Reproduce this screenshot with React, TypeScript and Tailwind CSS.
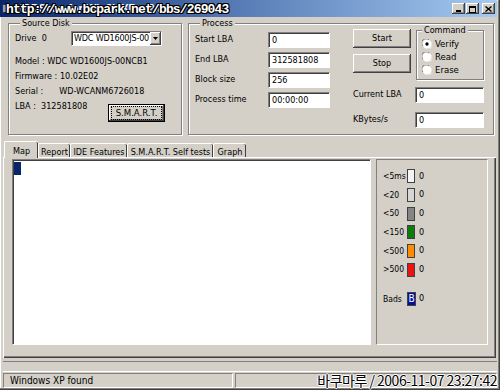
import React from "react";

const ui = "font-['DejaVu_Sans_Condensed','Liberation_Sans',sans-serif]";

const raised =
  "bg-[#d4d0c8] shadow-[inset_-1px_-1px_0_#404040,inset_1px_1px_0_#fff,inset_-2px_-2px_0_#808080]";
const sunken = "border border-[#808080] border-b-white border-r-white shadow-[inset_1px_1px_0_#404040]";

function Edit({ value, className = "" }: { value: string; className?: string }) {
  return (
    <div className={`flex h-[16px] items-center bg-white pl-[3px] ${sunken} ${className}`}>
      <span className="whitespace-nowrap text-[9px] leading-none">{value}</span>
    </div>
  );
}

function Group({ title, className = "", children }: { title: string; className?: string; children: React.ReactNode }) {
  return (
    <fieldset
      className={`border border-[#808080] shadow-[1px_1px_0_#fff,inset_1px_1px_0_#fff] ${className}`}
    >
      <legend className="ml-[5px] bg-[#d4d0c8] px-[2px] text-[9px] leading-[10px]">{title}</legend>
      {children}
    </fieldset>
  );
}

function Radio({ label, checked }: { label: string; checked?: boolean }) {
  return (
    <div className="flex h-[13px] items-center gap-[3px] pl-[5px]">
      <svg width="10" height="10" viewBox="0 0 12 12">
        <circle cx="6" cy="6" r="5.5" fill="#fff" />
        <path d="M1.2 8.5 A5 5 0 0 1 8.5 1.2" stroke="#808080" strokeWidth="1.2" fill="none" />
        <path d="M10.8 3.5 A5 5 0 0 1 3.5 10.8" stroke="#e8e8e8" strokeWidth="1.2" fill="none" />
        {checked && <circle cx="6" cy="6" r="2" fill="#000" />}
      </svg>
      <span className="text-[9.5px] leading-none">{label}</span>
    </div>
  );
}

function Button({ label, className = "" }: { label: string; className?: string }) {
  return (
    <div className={`flex items-center justify-center text-[9px] ${raised} ${className}`}>{label}</div>
  );
}

const legend = [
  { label: "<5ms", color: "bg-[#f4f4f4]" },
  { label: "<20", color: "bg-[#d6d6d6]" },
  { label: "<50", color: "bg-[#858585]" },
  { label: "<150", color: "bg-[#0a7d0a]" },
  { label: "<500", color: "bg-[#ff8c00]" },
  { label: ">500", color: "bg-[#ee1111]" },
];

const tabs = [
  { label: "Map", w: "w-[34px]" },
  { label: "Report", w: "w-[32px]" },
  { label: "IDE Features", w: "w-[57px]" },
  { label: "S.M.A.R.T. Self tests", w: "w-[86px]" },
  { label: "Graph", w: "w-[33px]" },
];

export default function App() {
  return (
    <div
      className={`relative h-[390px] w-[500px] overflow-hidden bg-[#d4d0c8] text-black ${ui} shadow-[inset_-1px_-1px_0_#404040,inset_-2px_-2px_0_#808080,inset_1px_1px_0_#fff]`}
    >
      {/* title bar */}
      <div className="flex h-[17px] w-[497px] items-center bg-gradient-to-r from-[#0a246a] via-[#5a7fb8] to-[#a6caf0] pl-[2px]">
        <div className="h-[9px] w-[9px] border border-[#203060] bg-[#8aa0c8]" />
        <span className="ml-[4px] font-['Liberation_Sans',sans-serif] text-[11px] font-bold leading-none text-white">
          HDDScan for Win2k/XP&nbsp;&nbsp;v2.8
        </span>
        <div className="ml-auto flex items-center gap-[1px] pr-[2px]">
          {["min", "max"].map((k) => (
            <div key={k} className={`flex h-[11px] w-[13px] items-end justify-center pb-[2px] ${raised}`}>
              {k === "min" ? (
                <div className="h-[2px] w-[5px] bg-black" />
              ) : (
                <div className="mb-[-1px] h-[7px] w-[7px] border border-black border-t-2" />
              )}
            </div>
          ))}
          <div className={`ml-[2px] flex h-[11px] w-[13px] items-center justify-center ${raised}`}>
            <svg width="7" height="6" viewBox="0 0 7 6">
              <path d="M0.5 0.5 L6.5 5.5 M6.5 0.5 L0.5 5.5" stroke="#000" strokeWidth="1.4" />
            </svg>
          </div>
        </div>
      </div>

      {/* top section */}
      <div className="flex h-[120px] gap-[6px] pl-[8px] pt-[1px]">
        <Group title="Source Disk" className="h-[117px] w-[174px] px-[6px]">
          <div className="mt-[3px] flex h-[15px] items-center">
            <span className="w-[56px] text-[9px]">Drive&nbsp;&nbsp;0</span>
            <div className={`flex h-[15px] w-[91px] items-center overflow-hidden bg-white pl-[2px] ${sunken}`}>
              <span className="whitespace-nowrap text-[9px] leading-none tracking-[-0.2px]">WDC WD1600JS-00</span>
              <div className={`ml-auto flex h-full w-[11px] shrink-0 items-center justify-center ${raised}`}>
                <svg width="5" height="3" viewBox="0 0 5 3">
                  <path d="M0 0 H5 L2.5 3 Z" fill="#000" />
                </svg>
              </div>
            </div>
          </div>
          <div className="mt-[10px] flex flex-col gap-[5px] text-[9px] leading-[10px]">
            <span>Model : WDC WD1600JS-00NCB1</span>
            <span>Firmware : 10.02E02</span>
            <span>
              Serial :<span className="ml-[16px]">WD-WCANM6726018</span>
            </span>
            <div className="flex items-start">
              <span>LBA :&nbsp;&nbsp;312581808</span>
              <div className="ml-auto mr-[10px] mt-[3px] border border-black">
                <div className={`flex h-[16px] w-[55px] items-center justify-center ${raised}`}>
                  <span className="border border-dotted border-black px-[4px] py-[1px] text-[9.5px] leading-none">
                    S.M.A.R.T.
                  </span>
                </div>
              </div>
            </div>
          </div>
        </Group>

        <Group title="Process" className="flex h-[117px] w-[306px] pl-[6px]">
          <div className="flex">
            <div className="mt-[4px] flex flex-col gap-[4px]">
              {[
                ["Start LBA", "0"],
                ["End LBA", "312581808"],
                ["Block size", "256"],
                ["Process time", "00:00:00"],
              ].map(([l, v]) => (
                <div key={l} className="flex items-center">
                  <span className="w-[73px] text-[9px]">{l}</span>
                  <Edit value={v} className="w-[62px]" />
                </div>
              ))}
            </div>
            <div className="ml-[23px] flex flex-col">
              <div className="flex">
                <div className="mt-[1px] flex flex-col gap-[6px]">
                  <Button label="Start" className="h-[19px] w-[58px]" />
                  <Button label="Stop" className="h-[19px] w-[58px]" />
                </div>
                <Group title="Command" className="ml-[5px] mt-[-3px] h-[55px] w-[68px] pt-[2px]">
                  <Radio label="Verify" checked />
                  <Radio label="Read" />
                  <Radio label="Erase" />
                </Group>
              </div>
              <div className="mt-[7px] flex items-center">
                <span className="w-[62px] text-[9px]">Current LBA</span>
                <Edit value="0" className="w-[69px]" />
              </div>
              <div className="mt-[9px] flex items-center">
                <span className="w-[62px] text-[9px]">KBytes/s</span>
                <Edit value="0" className="w-[69px]" />
              </div>
            </div>
          </div>
        </Group>
      </div>

      {/* tabs */}
      <div className="mt-[4px] flex h-[16px] items-end pl-[4px]">
        {tabs.map((t, i) => (
          <div
            key={t.label}
            className={`flex items-start justify-center whitespace-nowrap rounded-t-[2px] border-l border-t border-white shadow-[inset_-1px_0_0_#404040] text-[9px] ${t.w} ${
              i === 0 ? "relative z-10 -mb-[1px] h-[17px] bg-[#d4d0c8] pt-[3px]" : "h-[14px] pt-[2px]"
            }`}
          >
            {t.label}
          </div>
        ))}
      </div>
      <div className="mx-[3px] flex h-[201px] w-[493px] gap-[5px] border-l border-t border-white pl-[8px] pt-[1px] shadow-[inset_-1px_-1px_0_#404040,inset_-2px_-2px_0_#808080]">
        <div className="h-[186px] w-[359px] border border-[#808080] border-b-white border-r-white bg-white shadow-[inset_1px_1px_0_#404040]">
          <div className="ml-[1px] mt-[2px] h-[13px] w-[7px] bg-[#0a246a]" />
        </div>
        <div className="flex h-[186px] w-[112px] flex-col border border-[#808080] border-b-white border-r-white pl-[6px] pt-[7px]">
          {legend.map((l) => (
            <div key={l.label} className="flex h-[18.7px] items-center text-[8.5px]">
              <span className="w-[24px]">{l.label}</span>
              <div className={`h-[14px] w-[8px] border border-[#404040] ${l.color}`} />
              <span className="ml-[4px] text-[9px]">0</span>
            </div>
          ))}
          <div className="mt-[11px] flex h-[18px] items-center text-[8.5px]">
            <span className="w-[24px]">Bads</span>
            <div className="flex h-[14px] w-[9px] items-center justify-center border border-[#404040] bg-[#0010a0] text-[10px] leading-none text-white">
              B
            </div>
            <span className="ml-[3px] text-[9px]">0</span>
          </div>
        </div>
      </div>

      {/* progress strip */}
      <div className="mx-[3px] mt-[3px] h-[11px] w-[494px] border-t border-[#808080] border-b border-b-white" />

      {/* status bar */}
      <div className="mx-[3px] mt-[1px] flex h-[15px] gap-[2px]">
        <div className="flex w-[230px] items-center border border-[#808080] border-b-white border-r-white pl-[6px] text-[10px]">
          Windows XP found
        </div>
        <div className="w-[262px] border border-[#808080] border-b-white border-r-white" />
      </div>

      {/* watermarks */}
      <div className="absolute left-[6px] top-[3px] font-['Liberation_Mono',monospace] text-[13px] font-bold leading-none tracking-[-0.85px] text-white [text-shadow:1px_0_0_#000,-1px_0_0_#000,0_1px_0_#000,0_-1px_0_#000,1px_1px_0_#000,-1px_-1px_0_#000,1px_-1px_0_#000,-1px_1px_0_#000]">
        http://www.bcpark.net/bbs/269043
      </div>
      <div className="absolute right-[3px] top-[373px] font-['Noto_Sans_CJK_KR',sans-serif] text-[14px] leading-none tracking-[-0.5px] text-black [text-shadow:1px_0_0_#fff,-1px_0_0_#fff,0_1px_0_#fff,0_-1px_0_#fff]">
        바쿠마루 / 2006-11-07 23:27:42
      </div>
    </div>
  );
}
